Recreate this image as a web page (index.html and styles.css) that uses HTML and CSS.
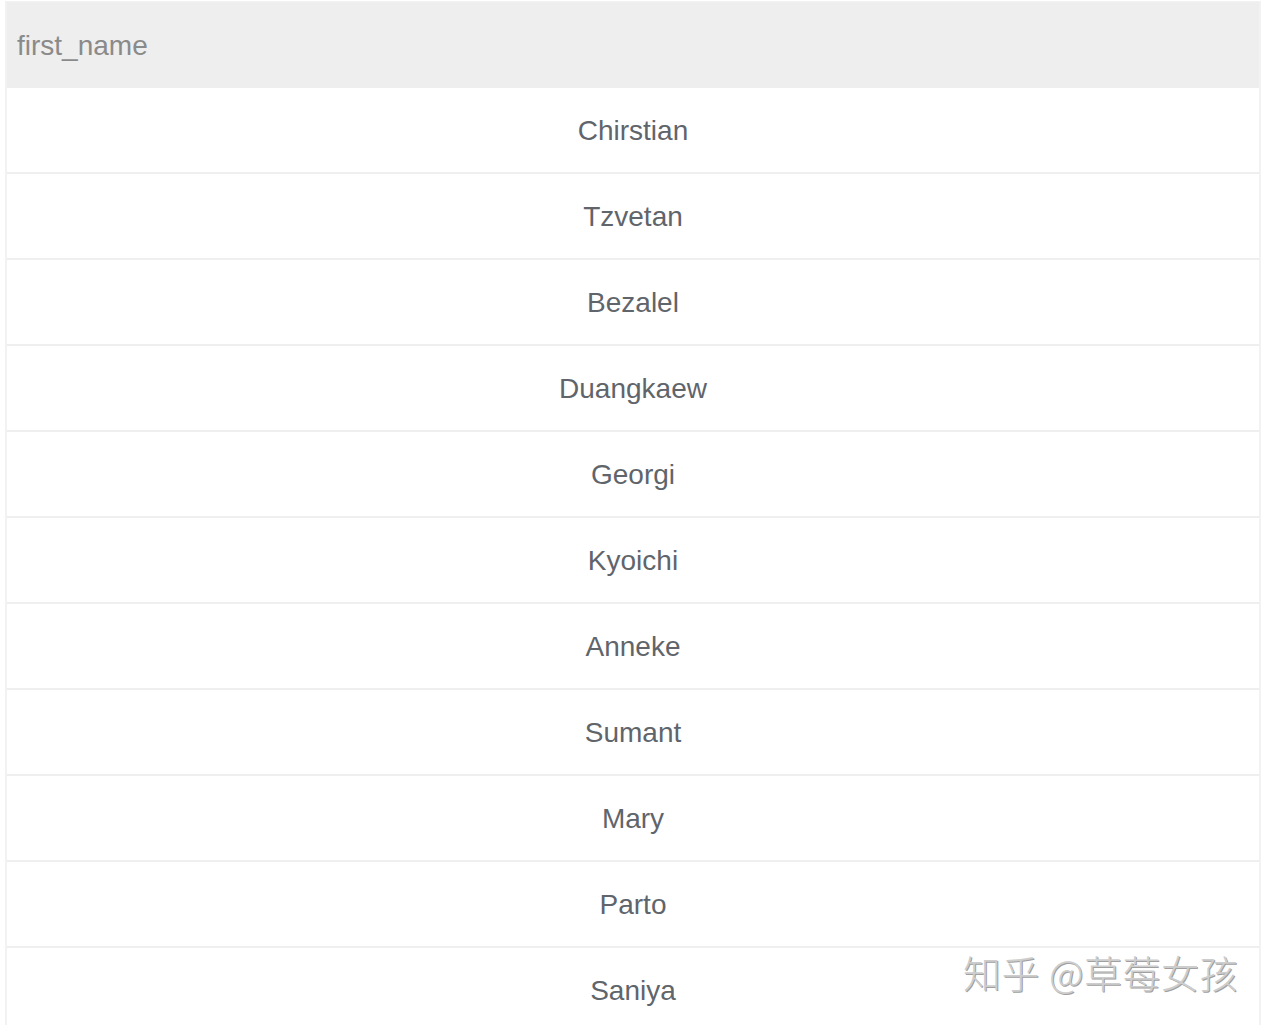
FILE: index.html
```html
<!DOCTYPE html>
<html>
<head>
<meta charset="utf-8">
<link rel="stylesheet" href="styles.css">
</head>
<body>
<div class="table">
  <div class="head">first_name</div>
  <div class="row">Chirstian</div>
  <div class="row">Tzvetan</div>
  <div class="row">Bezalel</div>
  <div class="row">Duangkaew</div>
  <div class="row">Georgi</div>
  <div class="row">Kyoichi</div>
  <div class="row">Anneke</div>
  <div class="row">Sumant</div>
  <div class="row">Mary</div>
  <div class="row">Parto</div>
  <div class="row">Saniya</div>
</div>
<div class="watermark">知乎 @草莓女孩</div>
</body>
</html>
```
FILE: styles.css
```css
html, body {
  margin: 0;
  padding: 0;
  background: #ffffff;
  overflow: hidden;
}
body {
  padding: 1px 8px 0 5px;
  font-family: Arial, "Liberation Sans", sans-serif;
}
.table {
  border: 2px solid #f2f2f2;
  border-top-width: 1px;
  border-bottom: none;
  display: flex;
  flex-direction: column;
}
.head {
  box-sizing: border-box;
  height: 86px;
  padding-top: 1px;
  background: #eeeeee;
  color: #8a8a8a;
  font-size: 28px;
  display: flex;
  align-items: center;
  padding-left: 10px;
}
.row {
  box-sizing: border-box;
  height: 86px;
  padding-top: 2px;
  border-top: 2px solid #efefef;
  display: flex;
  align-items: center;
  justify-content: center;
  color: #5f656b;
  font-size: 28px;
}
.head + .row {
  border-top: none;
  height: 84px;
}
.watermark {
  position: absolute;
  left: 963px;
  top: 944px;
  font-family: "Noto Sans CJK SC", "Liberation Sans", sans-serif;
  font-weight: 300;
  font-size: 38px;
  letter-spacing: 0.5px;
  color: #cdcdcd;
  text-shadow: 1px 1px 0 #a0a0a0;
  white-space: nowrap;
}
```
